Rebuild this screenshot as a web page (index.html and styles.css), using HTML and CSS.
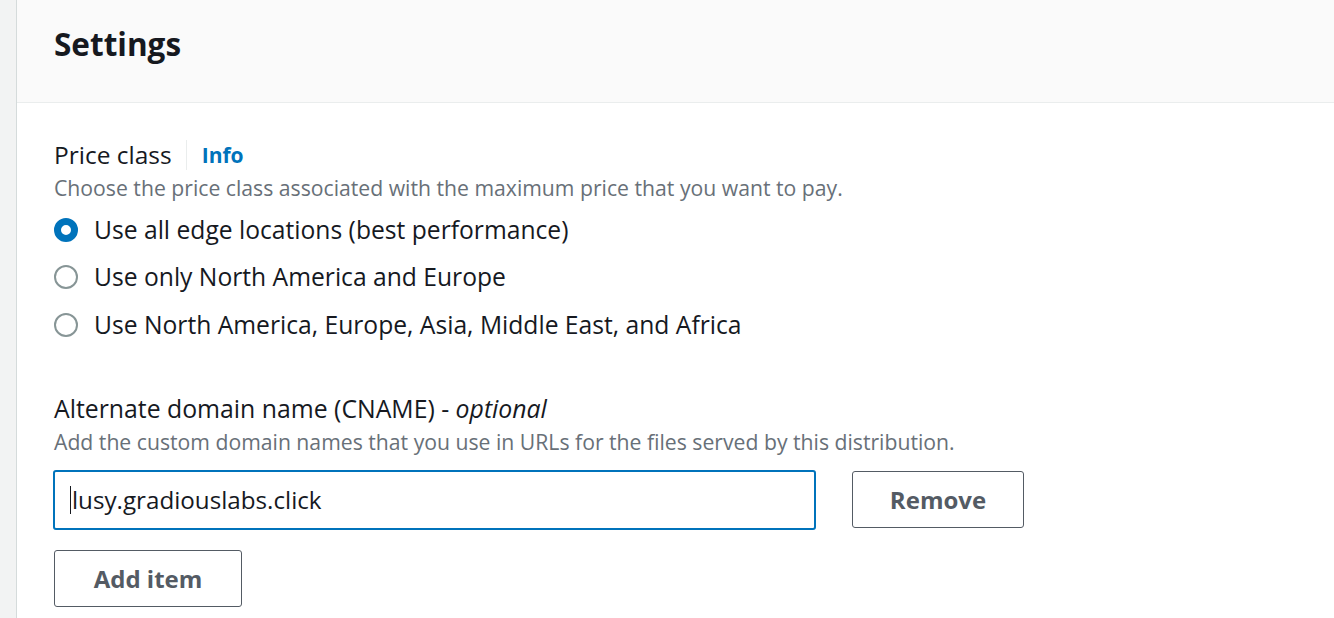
FILE: index.html
```html
<!DOCTYPE html>
<html lang="en">
<head>
<meta charset="utf-8">
<title>Settings</title>
<link rel="stylesheet" href="styles.css">
</head>
<body>
<div class="layout">
  <div class="gutter"></div>
  <section class="panel">
    <header class="panel-header">
      <h2 class="panel-title">Settings</h2>
    </header>
    <div class="panel-body">
      <div class="field-label-row">
        <span class="field-label">Price class</span>
        <span class="divider"></span>
        <a class="info-link" href="#">Info</a>
      </div>
      <div class="field-desc">Choose the price class associated with the maximum price that you want to pay.</div>
      <div class="radio-group">
        <label class="radio-row"><span class="radio checked"></span><span class="radio-text">Use all edge locations (best performance)</span></label>
        <label class="radio-row"><span class="radio"></span><span class="radio-text">Use only North America and Europe</span></label>
        <label class="radio-row"><span class="radio"></span><span class="radio-text">Use North America, Europe, Asia, Middle East, and Africa</span></label>
      </div>
      <div class="field-label-row cname-label">
        <span class="field-label">Alternate domain name (CNAME) - <i>optional</i></span>
      </div>
      <div class="field-desc">Add the custom domain names that you use in URLs for the files served by this distribution.</div>
      <div class="input-row">
        <div class="text-input"><span class="caret"></span>lusy.gradiouslabs.click</div>
        <button class="btn remove-btn">Remove</button>
      </div>
      <button class="btn add-btn">Add item</button>
    </div>
  </section>
</div>
</body>
</html>
```
FILE: styles.css
```css
html, body {
  margin: 0;
  padding: 0;
}
body {
  background: #f2f3f3;
  font-family: "Open Sans", "Noto Sans", sans-serif;
  color: #16191f;
  height: 618px;
  overflow: hidden;
}
.layout {
  display: flex;
  height: 618px;
}
.gutter {
  width: 16px;
  flex: none;
}
.panel {
  flex: 1;
  background: #ffffff;
  border-left: 1px solid #d5dbdb;
}
.panel-header {
  background: #fafafa;
  height: 103px;
  border-bottom: 1px solid #eaeded;
  box-sizing: border-box;
  padding: 24px 0 0 37px;
}
.panel-title {
  margin: 0;
  font-size: 31.5px;
  line-height: 40px;
  font-weight: 700;
  color: #16191f;
}
.panel-body {
  padding: 36px 0 0 37px;
}
.field-label-row {
  display: flex;
  align-items: center;
  height: 32px;
}
.field-label {
  font-size: 24.5px;
  line-height: 32px;
  color: #16191f;
  white-space: nowrap;
}
.divider {
  width: 1px;
  height: 30px;
  background: #eaeded;
  margin: 0 15px 0 14px;
}
.info-link {
  font-size: 21px;
  font-weight: 700;
  color: #0073bb;
  text-decoration: none;
}
.field-desc {
  margin-top: 2px;
  font-size: 21.2px;
  line-height: 30px;
  color: #687078;
  white-space: nowrap;
}
.radio-group {
  margin-top: 3px;
  display: flex;
  flex-direction: column;
}
.radio-row {
  display: flex;
  align-items: center;
  height: 47.5px;
}
.radio {
  width: 24px;
  height: 24px;
  box-sizing: border-box;
  border-radius: 50%;
  border: 2px solid #879596;
  background: #fff;
  flex: none;
}
.radio.checked {
  border: 7px solid #0073bb;
}
.radio-text {
  margin-left: 16px;
  font-size: 24.65px;
  line-height: 32px;
  color: #16191f;
  white-space: nowrap;
}
.cname-label {
  margin-top: 43px;
}
.cname-label .field-label {
  font-size: 24.8px;
}
.cname-label + .field-desc {
  margin-top: 3px;
}
.input-row {
  display: flex;
  align-items: flex-start;
  margin-top: 13px;
  margin-left: -1px;
}
.text-input {
  width: 763px;
  height: 60px;
  box-sizing: border-box;
  border: 2px solid #0073bb;
  border-radius: 3px;
  padding-left: 15px;
  display: flex;
  align-items: center;
  font-size: 24.2px;
  color: #16191f;
}
.caret {
  width: 1px;
  height: 28px;
  background: #16191f;
  margin-right: 1px;
}
.btn {
  font-family: "Open Sans", "Noto Sans", sans-serif;
  font-size: 24px;
  font-weight: 700;
  color: #545b64;
  background: #fff;
  border: 1px solid #545b64;
  border-radius: 3px;
  box-sizing: border-box;
  padding: 0;
  cursor: pointer;
}
.remove-btn {
  margin-left: 36px;
  margin-top: 1px;
  width: 172px;
  height: 57px;
}
.add-btn {
  display: block;
  margin-top: 20px;
  width: 188px;
  height: 57px;
}
```
